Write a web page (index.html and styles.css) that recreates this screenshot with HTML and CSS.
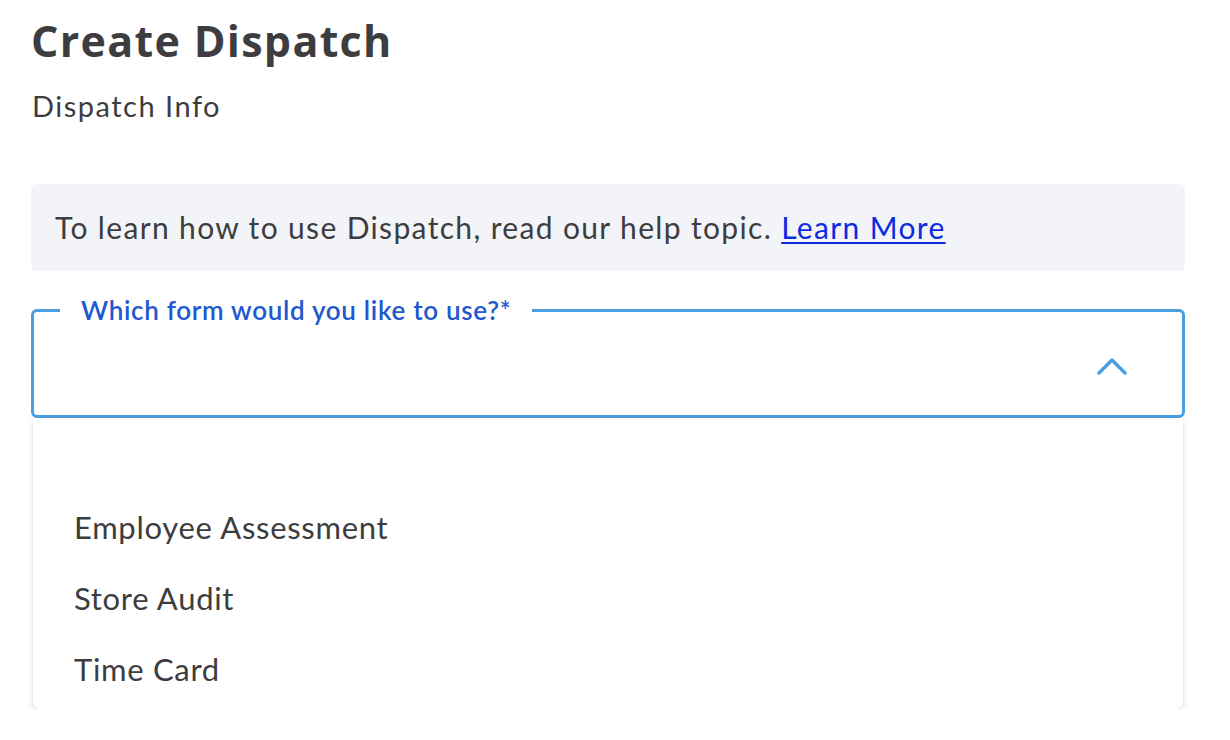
FILE: index.html
```html
<!DOCTYPE html>
<html lang="en">
<head>
<meta charset="utf-8">
<title>Create Dispatch</title>
<link rel="stylesheet" href="styles.css">
</head>
<body>
<main class="page">
  <h1 class="title">Create Dispatch</h1>
  <h2 class="subtitle">Dispatch Info</h2>
  <div class="info"><span>To learn how to use Dispatch, read our help topic. <a class="info-link" href="#">Learn More</a></span></div>
  <div class="select">
    <fieldset class="select-field">
      <legend class="select-legend">Which form would you like to use?*</legend>
      <div class="select-control">
        <span class="select-value"></span>
        <svg class="chevron" width="30" height="17" viewBox="0 0 30 17" aria-hidden="true">
          <path d="M2 15 L15 2 L28 15" fill="none" stroke="#4a9fe0" stroke-width="3.4" stroke-linecap="round" stroke-linejoin="round"/>
        </svg>
      </div>
    </fieldset>
    <ul class="menu">
      <li class="menu-item menu-item-empty"></li>
      <li class="menu-item">Employee Assessment</li>
      <li class="menu-item">Store Audit</li>
      <li class="menu-item">Time Card</li>
    </ul>
  </div>
</main>
</body>
</html>
```
FILE: styles.css
```css
* { box-sizing: border-box; }
html, body { margin: 0; padding: 0; background: #ffffff; }
body {
  font-family: "Lato", "Liberation Sans", sans-serif;
  color: #3d3d3f;
}
.page {
  padding: 0 45px 0 31px;
}
.title {
  margin: 0;
  padding-top: 13px;
  font-family: "Open Sans", "Lato", sans-serif;
  font-size: 43px;
  line-height: 56px;
  font-weight: 700;
  letter-spacing: 1.3px;
}
.subtitle {
  margin: 20px 0 0 0;
  padding-left: 1px;
  font-size: 29px;
  line-height: 34px;
  font-weight: 400;
  letter-spacing: 1.5px;
}
.info {
  margin-top: 61px;
  height: 87px;
  background: #f3f4f8;
  border-radius: 6px;
  padding: 0 24px 2px;
  display: flex;
  align-items: center;
  font-size: 30px;
  letter-spacing: 1.35px;
}
.info-link {
  color: #0b2be2;
  text-decoration: underline;
  text-decoration-thickness: 2px;
  text-underline-offset: 3px;
}
.select {
  margin-top: 24px;
}
.select-field {
  margin: 0;
  padding: 0;
  border: 3px solid #4a9fe0;
  border-radius: 6px;
  min-width: 0;
}
.select-legend {
  margin-left: 26px;
  padding: 0 21px;
  font-size: 26px;
  line-height: 30px;
  font-weight: 600;
  letter-spacing: 0.7px;
  color: #2158cf;
}
.select-control {
  height: 90px;
  display: flex;
  align-items: center;
  justify-content: flex-end;
  padding-right: 55px;
  padding-bottom: 8px;
}
.chevron { display: block; }
.menu {
  list-style: none;
  margin: 0 2px;
  padding: 2px 0 5px;
  background: #ffffff;
  border-radius: 0 0 6px 6px;
  box-shadow: 0 2px 6px rgba(40, 60, 110, 0.14), 0 0 1px rgba(40, 60, 110, 0.2);
}
.menu-item {
  height: 71px;
  display: flex;
  align-items: center;
  padding-left: 41px;
  font-size: 31px;
  letter-spacing: 0.7px;
}
```
